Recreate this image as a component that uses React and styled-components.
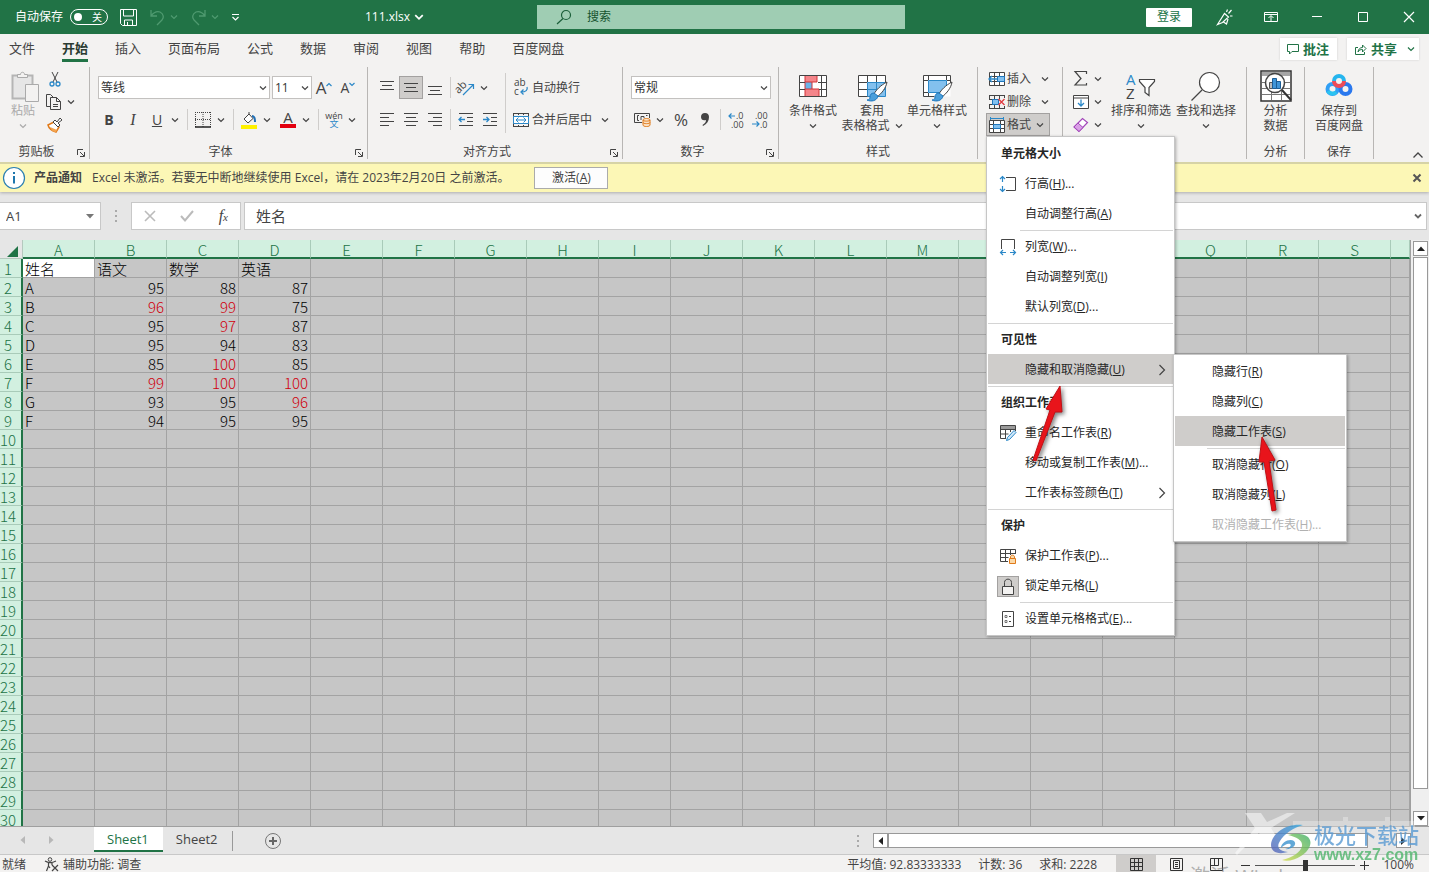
import React from "react";
import styled, { createGlobalStyle } from "styled-components";

const sheetRows = [
  ["姓名", "语文", "数学", "英语"],
  ["A", 95, 88, 87],
  ["B", 96, 99, 75],
  ["C", 95, 97, 87],
  ["D", 95, 94, 83],
  ["E", 85, 100, 85],
  ["F", 99, 100, 100],
  ["G", 93, 95, 96],
  ["F", 94, 95, 95],
];

const columns = "ABCDEFGHIJKLMNOPQRS".split("");
const rowNumbers = Array.from({ length: 31 }, (_, i) => i + 1);
const tabs = [
  "文件",
  "开始",
  "插入",
  "页面布局",
  "公式",
  "数据",
  "审阅",
  "视图",
  "帮助",
  "百度网盘",
];

function Chevron({ color = "#444", size = 8, width = 1.2 }) {
  return (
    <Svg width={size} height={size} viewBox="0 0 8 8">
      <path d="M1 2.5l3 3 3-3" fill="none" stroke={color} strokeWidth={width} />
    </Svg>
  );
}

function Lines({ rows }) {
  return (
    <Svg width="16" height="16" viewBox="0 0 16 16">
      {rows.map(([x1, x2, y]) => (
        <path key={y} d={`M${x1} ${y}.5H${x2}`} stroke="#444" />
      ))}
    </Svg>
  );
}

function UndoIcon({ flip }) {
  return (
    <Svg width="17" height="17" viewBox="0 0 17 17">
      <g
        fill="none"
        stroke="#4f9a70"
        strokeWidth="1.3"
        transform={flip ? "translate(17 0) scale(-1 1)" : undefined}
      >
        <path d="M2 1v6h6M2 7c3-4 6-5 9-4 4 2 4 6 2 8l-5 5" />
      </g>
    </Svg>
  );
}

function TableArt({ children }) {
  return (
    <Svg width="32" height="32" viewBox="0 0 32 32">
      <path d="M2.500 4.500h27v21h-27z" fill="#fff" />
      {children}
    </Svg>
  );
}

function Brush() {
  return (
    <g>
      <path d="M31 11c-6 3-11 8-13 12l3 3c5-4 9-9 10-15z" fill="#fff" stroke="#444" />
      <path d="M18 22c-3 0-4 2-4 4s-1 3-3 3c4 2 10 1 11-4z" fill="#4a9fdb" stroke="#1f77bd" />
    </g>
  );
}

function Launcher() {
  return (
    <LauncherButton aria-label="更多选项">
      <Svg width="8" height="8" viewBox="0 0 8 8">
        <path d="M.5 6V.5H6M3 3l4 4M7.500 3v4.500H3" fill="none" stroke="#444" />
      </Svg>
    </LauncherButton>
  );
}

function Group({ label, width, launcher, children }) {
  return (
    <GroupBox $width={width}>
      <GroupBody>{children}</GroupBody>
      {label && (
        <GroupLabel>
          <span>{label}</span>
          {launcher && <Launcher />}
        </GroupLabel>
      )}
    </GroupBox>
  );
}

function Big({ icon, lines, width, caret, disabled }) {
  return (
    <BigButton $width={width} disabled={disabled}>
      {icon}
      {lines.map((line, i) => (
        <span key={line}>
          {line}
          {caret === "inline" && i === lines.length - 1 && <Chevron />}
        </span>
      ))}
      {caret === "below" && (
        <span>
          <Chevron color={disabled ? "#aaa" : "#444"} />
        </span>
      )}
    </BigButton>
  );
}

function Drop({ icon, label }) {
  return (
    <>
      <IconButton aria-label={label}>{icon}</IconButton>
      <CaretButton aria-label={`${label}选项`}>
        <Chevron />
      </CaretButton>
    </>
  );
}

function Item({ text, accel, dots, icon, active, pressed, disabled, more }) {
  return (
    <MenuItem role="menuitem" $active={active} disabled={disabled}>
      <MenuIcon $pressed={pressed}>{icon}</MenuIcon>
      <span>
        {text}(<u>{accel}</u>){dots && "..."}
      </span>
      {more && (
        <More>
          <Svg width="8" height="12" viewBox="0 0 8 12">
            <path d="M1.500 1l5 5-5 5" fill="none" stroke="#444" strokeWidth="1.2" />
          </Svg>
        </More>
      )}
    </MenuItem>
  );
}

function TitleBar() {
  return (
    <Title>
      <TitleLeft>
        <AutoSave>
          自动保存
          <Toggle>
            <input type="checkbox" />
            <span>关</span>
          </Toggle>
        </AutoSave>
        <QuickButton aria-label="保存">
          <Svg width="17" height="17" viewBox="0 0 17 17">
            <path
              d="M.5.5h16v16h-14l-2-2zM3.500 1v6h10V1M4.500 16v-5h8v5M7.500 16v-3"
              fill="none"
              stroke="#fff"
            />
          </Svg>
        </QuickButton>
        <QuickButton aria-label="撤消">
          <UndoIcon />
          <Chevron color="#4f9a70" />
        </QuickButton>
        <QuickButton aria-label="恢复">
          <UndoIcon flip />
          <Chevron color="#4f9a70" />
        </QuickButton>
        <QuickButton aria-label="自定义快速访问工具栏">
          <Svg width="9" height="9" viewBox="0 0 9 9">
            <path d="M1 1.500h7M1.500 4l3 3 3-3" fill="none" stroke="#fff" strokeWidth="1.2" />
          </Svg>
        </QuickButton>
        <FileName>
          111.xlsx
          <Chevron color="#fff" size={10} width={1.4} />
        </FileName>
      </TitleLeft>
      <Search>
        <Svg width="16" height="16" viewBox="0 0 16 16">
          <circle cx="10" cy="6" r="4.500" fill="none" stroke="#1b5e39" strokeWidth="1.200" />
          <path d="M7 9.500L1 15" stroke="#1b5e39" strokeWidth="1.200" />
        </Svg>
        <input aria-label="搜索" placeholder="搜索" />
      </Search>
      <TitleRight>
        <SignIn>登录</SignIn>
        <WindowButton aria-label="墨迹">
          <Svg width="18" height="18" viewBox="0 0 18 18">
            <path
              d="M1.500 16.500L8.500 5.500l4 3.500-6 5.500zM7.500 14l3 2 1.500-5M10.500 4l1-2.500M12.500 5.500l3-3.500M14 8h2.500"
              fill="none"
              stroke="#fff"
              strokeWidth="1.200"
            />
          </Svg>
        </WindowButton>
        <WindowButton aria-label="功能区显示选项">
          <Svg width="14" height="12" viewBox="0 0 14 12">
            <path d="M.5 1.500h13v9H.5zM.5 3.500h13M7 10V5M4.500 7L7 4.500 9.500 7" fill="none" stroke="#fff" />
          </Svg>
        </WindowButton>
        <WindowButton aria-label="最小化">
          <Svg width="10" height="10" viewBox="0 0 10 10">
            <path d="M0 4.500h10" stroke="#fff" />
          </Svg>
        </WindowButton>
        <WindowButton aria-label="最大化">
          <Svg width="10" height="10" viewBox="0 0 10 10">
            <path d="M.5.500h9v9h-9z" fill="none" stroke="#fff" />
          </Svg>
        </WindowButton>
        <WindowButton aria-label="关闭">
          <Svg width="10" height="10" viewBox="0 0 10 10">
            <path d="M0 0l10 10M10 0L0 10" stroke="#fff" strokeWidth="1.200" />
          </Svg>
        </WindowButton>
      </TitleRight>
    </Title>
  );
}

function TabBar() {
  return (
    <TabRow>
      {tabs.map((tab) => (
        <Tab key={tab} $active={tab === "开始"}>
          {tab}
        </Tab>
      ))}
      <ShareArea>
        <ShareButton>
          <Svg width="12" height="12" viewBox="0 0 12 12">
            <path d="M.5 1.500h11v7H5l-2.500 2.500V8.500h-2z" fill="none" stroke="#217346" />
          </Svg>
          批注
        </ShareButton>
        <ShareButton>
          <Svg width="13" height="13" viewBox="0 0 13 13">
            <path
              d="M4 4.500H1.500v7h9V9M4 9c.5-3 2-4.500 4.500-4.500V2L12 5.500 8.500 9V6.500C6.500 6.500 5 7 4 9z"
              fill="none"
              stroke="#217346"
            />
          </Svg>
          共享
          <ShareCaret>
            <Chevron color="#217346" />
          </ShareCaret>
        </ShareButton>
      </ShareArea>
    </TabRow>
  );
}

function ClipboardGroup() {
  return (
    <Group label="剪贴板" width={90} launcher>
      <Columns $left={7} $gap={4}>
        <Big
          width={32}
          lines={["粘贴"]}
          caret="below"
          disabled
          icon={
            <Svg width="32" height="32" viewBox="0 0 32 32">
              <path d="M5.500 4.500h20v23h-20z" fill="#e6e6e6" stroke="#b5b5b5" strokeWidth="2" />
              <path d="M10.500 6.500v-3h3c0-3 4-3 4 0h3v3z" fill="#f3f2f1" stroke="#aaa" />
              <path d="M18.500 13.500h13v17h-13z" fill="#f3f2f1" stroke="#aaa" />
            </Svg>
          }
        />
        <Stack>
          <StackRow>
            <IconButton aria-label="剪切">
              <Svg width="16" height="16" viewBox="0 0 16 16">
                <path d="M5 1l5 10M11 1L6 11" stroke="#444" fill="none" />
                <g fill="none" stroke="#2b88c8" strokeWidth="1.300">
                  <circle cx="5" cy="13" r="2" />
                  <circle cx="11" cy="13" r="2" />
                </g>
              </Svg>
            </IconButton>
          </StackRow>
          <StackRow>
            <Drop
              label="复制"
              icon={
                <Svg width="18" height="16" viewBox="0 0 18 16">
                  <path d="M6 12.500H1.500v-12h4l3 3M5.500 3.500h6l4 4v8h-10z" fill="#f3f2f1" stroke="#444" />
                  <path d="M11.500 3.500v4h4M8 10.500h5M8 12.500h5" fill="none" stroke="#444" />
                </Svg>
              }
            />
          </StackRow>
          <StackRow>
            <IconButton aria-label="格式刷">
              <Svg width="16" height="16" viewBox="0 0 16 16">
                <path d="M1 8l6-3 5 5-3 5c-3-1-7-3-8-7z" fill="#fff" stroke="#e07a1a" strokeWidth="1.500" />
                <path d="M3 10l7 3-1 2c-3 0-5-2-6-5z" fill="#f4a550" />
                <path d="M6 5l2-2 2 2 3-4 2 2-4 3 2 2-2 2z" fill="#fff" stroke="#444" />
              </Svg>
            </IconButton>
          </StackRow>
        </Stack>
      </Columns>
    </Group>
  );
}

function FontGroup() {
  return (
    <Group label="字体" width={278} launcher>
      <ToolRow $left={8}>
        <Field $width={172}>
          <select aria-label="字体">
            <option>等线</option>
          </select>
          <Chevron />
        </Field>
        <Field $width={40} $gap={2}>
          <select aria-label="字号">
            <option>11</option>
          </select>
          <Chevron />
        </Field>
        <IconButton aria-label="增大字号">
          <GlyphLarge>A</GlyphLarge>
          <Svg width="6" height="12" viewBox="0 0 6 12">
            <path d="M.5 4L3 1.500 5.500 4" fill="none" stroke="#2b88c8" strokeWidth="1.200" />
          </Svg>
        </IconButton>
        <IconButton aria-label="减小字号">
          <Glyph>A</Glyph>
          <Svg width="6" height="12" viewBox="0 0 6 12">
            <path d="M.5 1L3 3.500 5.500 1" fill="none" stroke="#2b88c8" strokeWidth="1.200" />
          </Svg>
        </IconButton>
      </ToolRow>
      <ToolRow $left={7}>
        <IconButton aria-label="加粗">
          <b>B</b>
        </IconButton>
        <IconButton aria-label="倾斜">
          <Italic>I</Italic>
        </IconButton>
        <Drop label="下划线" icon={<u>U</u>} />
        <Sep />
        <Drop
          label="边框"
          icon={
            <Svg width="16" height="16" viewBox="0 0 16 16">
              <path
                d="M.5 0v15M15.500 0v15M8 0v15M0 .5h16M0 7.500h16"
                fill="none"
                stroke="#444"
                strokeDasharray="1 1"
              />
              <path d="M0 15h16" stroke="#222" strokeWidth="1.500" />
            </Svg>
          }
        />
        <Sep />
        <Drop
          label="填充颜色"
          icon={
            <Svg width="16" height="18" viewBox="0 0 16 18">
              <path d="M3 8l5-5 4 4.500-5 4.500zM8 3V1" fill="#fff" stroke="#444" />
              <path d="M11 5c2 0 3 2 3 6" fill="none" stroke="#1f6fb5" strokeWidth="2" />
              <path d="M0 14h16v4H0z" fill="#fff100" />
            </Svg>
          }
        />
        <Drop label="字体颜色" icon={<FontColor>A</FontColor>} />
        <Sep />
        <Drop
          label="拼音"
          icon={
            <Pinyin>
              wén
              <i>文</i>
            </Pinyin>
          }
        />
      </ToolRow>
    </Group>
  );
}

function AlignGroup() {
  return (
    <Group label="对齐方式" width={255} launcher>
      <Columns $left={7}>
        <div>
          <ToolRow>
            <IconButton aria-label="顶端对齐">
              <Lines rows={[[1, 15, 1], [3, 13, 5], [1, 15, 9]]} />
            </IconButton>
            <IconButton aria-label="垂直居中" $active>
              <Lines rows={[[1, 15, 3], [3, 13, 7], [1, 15, 11]]} />
            </IconButton>
            <IconButton aria-label="底端对齐">
              <Lines rows={[[1, 15, 6], [3, 13, 10], [1, 15, 14]]} />
            </IconButton>
            <Sep />
            <Drop
              label="方向"
              icon={
                <Svg width="18" height="16" viewBox="0 0 18 16">
                  <text x="-2" y="10" fontSize="11" fill="#444" transform="rotate(-45 5 8)">
                    ab
                  </text>
                  <path d="M6 15L16 5M11.500 4.500h5V9" fill="none" stroke="#2b88c8" strokeWidth="1.200" />
                </Svg>
              }
            />
          </ToolRow>
          <ToolRow>
            <IconButton aria-label="左对齐">
              <Lines rows={[[1, 15, 1], [1, 10, 5], [1, 15, 9], [1, 10, 13]]} />
            </IconButton>
            <IconButton aria-label="居中">
              <Lines rows={[[1, 15, 1], [3, 13, 5], [1, 15, 9], [3, 13, 13]]} />
            </IconButton>
            <IconButton aria-label="右对齐">
              <Lines rows={[[1, 15, 1], [6, 15, 5], [1, 15, 9], [6, 15, 13]]} />
            </IconButton>
            <Sep />
            <IconButton aria-label="减少缩进量">
              <Svg width="16" height="16" viewBox="0 0 16 16">
                <path d="M1 1.500h14M9 5.500h6M9 9.500h6M1 13.500h14" stroke="#444" />
                <path d="M7 7.500H1M3.500 5L1 7.500 3.500 10" fill="none" stroke="#2b88c8" strokeWidth="1.300" />
              </Svg>
            </IconButton>
            <IconButton aria-label="增加缩进量">
              <Svg width="16" height="16" viewBox="0 0 16 16">
                <path d="M1 1.500h14M9 5.500h6M9 9.500h6M1 13.500h14" stroke="#444" />
                <path d="M1 7.500h6M4.500 5L7 7.500 4.500 10" fill="none" stroke="#2b88c8" strokeWidth="1.300" />
              </Svg>
            </IconButton>
          </ToolRow>
        </div>
        <TallSep />
        <div>
          <ToolRow>
            <TextButton>
              <Svg width="16" height="17" viewBox="0 0 16 17">
                <text x="1" y="7" fontSize="10" fill="#444">
                  ab
                </text>
                <text x="1" y="16" fontSize="10" fill="#444">
                  c
                </text>
                <path d="M14 8c1 3-1 5-6 5M10.500 10.500L8 13l2.500 2.500" fill="none" stroke="#2b88c8" strokeWidth="1.300" />
              </Svg>
              自动换行
            </TextButton>
          </ToolRow>
          <ToolRow>
            <TextButton>
              <Svg width="16" height="16" viewBox="0 0 16 16">
                <path d="M.5 1v14M15.500 1v14M0 1.500h16M0 14.500h16M5.500 1v2M10.500 1v2M5.500 13v2M10.500 13v2" stroke="#444" />
                <path d="M.5 4.500h15v7H.5z" fill="#fff" stroke="#2b88c8" />
                <path d="M3 8h10M5.500 5.500L3 8l2.500 2.500M10.500 5.500L13 8l-2.500 2.500" fill="none" stroke="#2b88c8" />
              </Svg>
              合并后居中
              <CaretSpace>
                <Chevron />
              </CaretSpace>
            </TextButton>
          </ToolRow>
        </div>
      </Columns>
    </Group>
  );
}

function NumberGroup() {
  return (
    <Group label="数字" width={156} launcher>
      <ToolRow $left={8}>
        <Field $width={140}>
          <select aria-label="数字格式">
            <option>常规</option>
          </select>
          <Chevron />
        </Field>
      </ToolRow>
      <ToolRow $left={7}>
        <Drop
          label="会计数字格式"
          icon={
            <Svg width="17" height="15" viewBox="0 0 17 15">
              <path d="M15.500 6V1.500H.5v9H8M5 3.500H3.500v5H5M7 8V4.500h3V6M12 3.500h1.500" fill="none" stroke="#444" />
              <path d="M9 8c0-2 7-2 7 0v5c0 2-7 2-7 0z" fill="#fbe3c8" stroke="#e07a1a" />
              <path d="M9 8c0 1.500 7 1.500 7 0M9 10.500c0 1.500 7 1.500 7 0" fill="none" stroke="#e07a1a" />
            </Svg>
          }
        />
        <IconButton aria-label="百分比样式">
          <GlyphLarge>%</GlyphLarge>
        </IconButton>
        <IconButton aria-label="千位分隔样式">
          <Svg width="8" height="13" viewBox="0 0 8 13">
            <path d="M4 0c2.500 0 4 1.500 4 4 0 4-2 7-6 9l-.5-1C4 10.500 5 9 5 7 2 8 0 6.500 0 4c0-2.500 1.500-4 4-4z" fill="#444" />
          </Svg>
        </IconButton>
        <Sep />
        <IconButton aria-label="增加小数位数">
          <Svg width="16" height="16" viewBox="0 0 16 16">
            <text x="8" y="7" fontSize="9" fill="#444">
              .0
            </text>
            <text x="3" y="16" fontSize="9" fill="#444">
              .00
            </text>
            <path d="M7 4H1M3.500 1.500L1 4l2.500 2.500" fill="none" stroke="#2b88c8" strokeWidth="1.200" />
          </Svg>
        </IconButton>
        <IconButton aria-label="减少小数位数">
          <Svg width="16" height="16" viewBox="0 0 16 16">
            <text x="3" y="7" fontSize="9" fill="#444">
              .00
            </text>
            <text x="8" y="16" fontSize="9" fill="#444">
              .0
            </text>
            <path d="M0 12h7M4.500 9.500L7 12l-2.500 2.500" fill="none" stroke="#2b88c8" strokeWidth="1.200" />
          </Svg>
        </IconButton>
      </ToolRow>
    </Group>
  );
}

function StylesGroup() {
  return (
    <Group label="样式" width={199}>
      <Columns $left={10} $gap={5}>
        <Big
          width={48}
          lines={["条件格式"]}
          caret="below"
          icon={
            <TableArt>
              <path d="M8 5h12v6H8z" fill="#f4858a" />
              <path d="M8 11h7v7H8z" fill="#6cb4e8" />
              <path d="M8 18h14v7H8z" fill="#f4858a" />
              <path d="M8 5v20M20 5v6M15 11v7M22 18v7M8 11h12M8 18h14" fill="none" stroke="#d13438" />
              <path d="M2.500 4.500h27v21h-27zM3 11.500h5M21 11.500h8M3 18.500h5M22 18.500h7M24.500 5v20" fill="none" stroke="#444" />
            </TableArt>
          }
        />
        <Big
          width={60}
          lines={["套用", "表格格式"]}
          caret="inline"
          icon={
            <TableArt>
              <path d="M11.500 11.500h18v14h-18z" fill="#83c0ee" />
              <path d="M11.500 11.500h18v14h-18zM20.500 11.500v14M12 18.500h17" fill="none" stroke="#2b88c8" />
              <path d="M29.500 12V4.500h-27v21h9M11.500 5v6M20.500 5v6M3 11.500h8M3 18.500h8" fill="none" stroke="#444" />
              <Brush />
            </TableArt>
          }
        />
        <Big
          width={60}
          lines={["单元格样式"]}
          caret="below"
          icon={
            <TableArt>
              <path d="M7.500 9.500h18v12h-18z" fill="#83c0ee" stroke="#2b88c8" />
              <path d="M29.500 12V4.500h-27v21h11M7.500 5v4M25.500 5v4M7.500 22v3M3 9.500h4M3 21.500h4M26 9.500h3" fill="none" stroke="#444" />
              <Brush />
            </TableArt>
          }
        />
      </Columns>
    </Group>
  );
}

function FormatMenu() {
  return (
    <Menu role="menu">
      <MenuHeading>单元格大小</MenuHeading>
      <Item
        text="行高"
        accel="H"
        dots
        icon={
          <Svg width="16" height="16" viewBox="0 0 16 16">
            <path d="M6 1.500h9.500v13H6" fill="none" stroke="#444" />
            <path d="M2.500 0v6M2.500 10v6M0 3L2.500.500 5 3M0 13l2.500 2.500L5 13" fill="none" stroke="#2b88c8" strokeWidth="1.200" />
          </Svg>
        }
      />
      <Item text="自动调整行高" accel="A" />
      <MenuLine $inset />
      <Item
        text="列宽"
        accel="W"
        dots
        icon={
          <Svg width="16" height="16" viewBox="0 0 16 16">
            <path d="M1.500 10V.5h13V10" fill="none" stroke="#444" />
            <path d="M0 13.500h6M10 13.500h6M3 11L.5 13.500 3 16M13 11l2.500 2.500L13 16" fill="none" stroke="#2b88c8" strokeWidth="1.200" />
          </Svg>
        }
      />
      <Item text="自动调整列宽" accel="I" />
      <Item text="默认列宽" accel="D" dots />
      <MenuLine />
      <MenuHeading>可见性</MenuHeading>
      <SubAnchor>
        <Item text="隐藏和取消隐藏" accel="U" active more />
        <SubMenu role="menu">
          <Item text="隐藏行" accel="R" />
          <Item text="隐藏列" accel="C" />
          <Item text="隐藏工作表" accel="S" active />
          <MenuLine $inset />
          <Item text="取消隐藏行" accel="O" />
          <Item text="取消隐藏列" accel="L" />
          <Item text="取消隐藏工作表" accel="H" dots disabled />
        </SubMenu>
      </SubAnchor>
      <MenuLine />
      <MenuHeading>组织工作表</MenuHeading>
      <Item
        text="重命名工作表"
        accel="R"
        icon={
          <Svg width="16" height="16" viewBox="0 0 16 16">
            <path d="M.5 1h15v3H.5z" fill="#9a9a9a" />
            <path d="M15.500 6V.5H.5v13H6M.5 4.500h15M.5 9h8M5.500 4.500v9M10.500 4.500V7" fill="none" stroke="#444" />
            <path d="M14 5.500l2 2-6.500 7-3 1 1-3z" fill="#cfe6f7" stroke="#2b88c8" />
          </Svg>
        }
      />
      <Item text="移动或复制工作表" accel="M" dots />
      <Item text="工作表标签颜色" accel="T" more />
      <MenuLine />
      <MenuHeading>保护</MenuHeading>
      <Item
        text="保护工作表"
        accel="P"
        dots
        icon={
          <Svg width="16" height="16" viewBox="0 0 16 16">
            <path d="M15.500 6V1.500H.5v12H8M.5 5.500h15M.5 9.500h8M5.500 1.500v12M10.500 1.500V7" fill="none" stroke="#444" />
            <path d="M9.500 10.500h6v5h-6zM10.500 10.500V9c0-2.500 4-2.500 4 0v1.500" fill="#fbd9a8" stroke="#e07a1a" />
          </Svg>
        }
      />
      <Item
        text="锁定单元格"
        accel="L"
        pressed
        icon={
          <Svg width="16" height="17" viewBox="0 0 16 17">
            <path d="M2.500 8.500h11v8h-11z" fill="#f3f2f1" stroke="#444" />
            <path d="M4.500 8V4.500c0-4.500 7-4.500 7 0V8" fill="none" stroke="#444" />
          </Svg>
        }
      />
      <MenuLine $inset />
      <Item
        text="设置单元格格式"
        accel="E"
        dots
        icon={
          <Svg width="12" height="16" viewBox="0 0 12 16">
            <path d="M.5.500h11v15H.5z" fill="none" stroke="#444" />
            <path d="M3 4.500h2v2H3zM3 9.500h2v2H3z" fill="none" stroke="#444" strokeWidth=".7" />
            <path d="M7 5.500h2M7 10.500h2" stroke="#444" />
          </Svg>
        }
      />
      <Pointers viewBox="0 0 310 140" width="310" height="140">
        <polygon points="46,80 63,30 59,29 73,6 75,32 68,32 49,81" />
        <polygon points="285,131 277,82 272,82 275,57 288,80 282,81 289,130" />
      </Pointers>
    </Menu>
  );
}

function CellsGroup() {
  return (
    <Group width={85}>
      <Columns $left={8}>
        <Stack>
          <CellButton>
            <Svg width="16" height="16" viewBox="0 0 16 16">
              <path d="M.5 1.500h15v13H.5zM.5 5.500h15M.5 10.500h15M5.500 1v14M10.500 1v14" fill="#fff" stroke="#444" />
              <path d="M8.500 5.500h7v5h-7z" fill="#83c0ee" stroke="#1f77bd" />
              <path d="M0 8h8M3 5L0 8l3 3" fill="none" stroke="#2b88c8" strokeWidth="1.400" />
            </Svg>
            插入
            <CaretEnd>
              <Chevron />
            </CaretEnd>
          </CellButton>
          <CellButton>
            <Svg width="16" height="16" viewBox="0 0 16 16">
              <path d="M0 1.500h16M0 14.500h16M5.500 1v4M10.500 1v4M5.500 11v4M10.500 11v4M.5 1v4M.5 11v4M0 5.500h5M0 10.500h5M15.500 1v3M15.500 12v3" fill="none" stroke="#444" />
              <path d="M3.500 5.500h6v5h-6z" fill="#83c0ee" stroke="#1f77bd" />
              <path d="M9.500 5l6 6M15.500 5l-6 6" stroke="#e0393e" strokeWidth="1.300" />
            </Svg>
            删除
            <CaretEnd>
              <Chevron />
            </CaretEnd>
          </CellButton>
          <MenuAnchor>
            <CellButton $active aria-haspopup="menu">
              <Svg width="16" height="16" viewBox="0 0 16 16">
                <path d="M.5 3.500h15v12H.5zM.5 7.500h15M.5 11.500h15M4.500 3v13M11.500 3v13" fill="#fff" stroke="#444" />
                <path d="M4.500 7.500h7v4h-7z" fill="#83c0ee" stroke="#1f77bd" />
                <path d="M1 1.500h14M1.500 0v3M14.500 0v3" stroke="#2b88c8" />
              </Svg>
              格式
              <Chevron />
            </CellButton>
            <FormatMenu />
          </MenuAnchor>
        </Stack>
      </Columns>
    </Group>
  );
}

function EditGroup() {
  return (
    <Group width={184}>
      <Columns $left={7} $gap={5}>
        <Stack>
          <StackRow>
            <Drop
              label="自动求和"
              icon={
                <Svg width="14" height="15" viewBox="0 0 14 15">
                  <path d="M12.500 3V.5H1l6 7-6 6.500h11.500V12" fill="none" stroke="#444" strokeWidth="1.200" />
                </Svg>
              }
            />
          </StackRow>
          <StackRow>
            <Drop
              label="填充"
              icon={
                <Svg width="16" height="14" viewBox="0 0 16 14">
                  <path d="M.5.500h15v13H.5zM.5 3h15" fill="#fff" stroke="#444" />
                  <path d="M8 4.500V11M5 8l3 3 3-3" fill="none" stroke="#2b88c8" strokeWidth="1.300" />
                </Svg>
              }
            />
          </StackRow>
          <StackRow>
            <Drop
              label="清除"
              icon={
                <Svg width="16" height="16" viewBox="0 0 16 16">
                  <path d="M1 10L9.500 1.500l5 4L6 14.500z" fill="#fff" stroke="#a347ba" strokeWidth="1.200" />
                  <path d="M1 10l4-4 5 4.500L6 14.500z" fill="#d9a0e6" stroke="#a347ba" />
                </Svg>
              }
            />
          </StackRow>
        </Stack>
        <Big
          width={60}
          lines={["排序和筛选"]}
          caret="below"
          icon={
            <Svg width="32" height="32" viewBox="0 0 32 32">
              <text x="1" y="14" fontSize="15" fill="#2b88c8">
                A
              </text>
              <text x="1" y="28" fontSize="15" fill="#444">
                Z
              </text>
              <path d="M14.500 8.500h15v2l-5.500 6v8l-4-3v-5l-5.500-6z" fill="#fff" stroke="#444" strokeWidth="1.200" />
            </Svg>
          }
        />
        <Big
          width={60}
          lines={["查找和选择"]}
          caret="below"
          icon={
            <Svg width="32" height="32" viewBox="0 0 32 32">
              <circle cx="19.500" cy="11.500" r="10" fill="#fff" stroke="#444" strokeWidth="1.200" />
              <path d="M12 19L1.500 29.500" stroke="#444" strokeWidth="1.300" />
            </Svg>
          }
        />
      </Columns>
    </Group>
  );
}

function Ribbon() {
  return (
    <RibbonRow>
      <ClipboardGroup />
      <FontGroup />
      <AlignGroup />
      <NumberGroup />
      <StylesGroup />
      <CellsGroup />
      <EditGroup />
      <Group label="分析" width={58}>
        <Big
          lines={["分析", "数据"]}
          icon={
            <Svg width="32" height="32" viewBox="0 0 32 32">
              <path d="M1 0h30v30H1z" fill="#fff" stroke="#333" strokeWidth="1.500" />
              <path d="M2 1h28v4H2z" fill="#a6a6a6" />
              <path d="M2 11.500h28M2 17.500h28M2 23.500h28M11.500 17v12M21.500 17v12" stroke="#777" />
              <circle cx="15" cy="12" r="9.500" fill="#fff" stroke="#444" strokeWidth="1.500" />
              <path d="M9.500 11.500h3v6h-3z" fill="#bbb" stroke="#555" />
              <path d="M12.500 7.500h4v10h-4zM16.500 10.500h4v7h-4z" fill="#3f95d8" stroke="#1b5c94" />
              <path d="M22 19l9 10" stroke="#333" strokeWidth="2" />
            </Svg>
          }
        />
      </Group>
      <Group label="保存" width={69}>
        <Big
          lines={["保存到", "百度网盘"]}
          icon={
            <Svg width="32" height="32" viewBox="0 0 32 32">
              <g fill="none" strokeWidth="4">
                <circle cx="9.500" cy="18" r="5" stroke="#2f9ff5" />
                <circle cx="22.500" cy="18" r="5" stroke="#2a78ee" />
                <path d="M11 10a5 5 0 0 1 10 0" stroke="#25b5ee" />
                <path d="M11 10a5 5 0 0 0 10 0" stroke="#ee4a56" />
                <path d="M5 20a5 5 0 0 0 8 1" stroke="#2bc3f0" />
              </g>
            </Svg>
          }
        />
      </Group>
      <Collapse aria-label="折叠功能区">
        <Svg width="12" height="8" viewBox="0 0 12 8">
          <path d="M1.500 6.500L6 2l4.500 4.500" fill="none" stroke="#444" strokeWidth="1.300" />
        </Svg>
      </Collapse>
    </RibbonRow>
  );
}

function Sheet() {
  return (
    <SheetArea>
      <GridClip>
        <Grid>
          <colgroup>
            <col className="head" />
            {columns.map((c) => (
              <col key={c} className="cell" />
            ))}
            <col />
          </colgroup>
          <thead>
            <tr>
              <Corner aria-label="全选">
                <Svg width="11" height="11" viewBox="0 0 11 11">
                  <path d="M11 0v11H0z" fill="#217346" />
                </Svg>
              </Corner>
              {columns.map((c) => (
                <ColHead key={c}>{c}</ColHead>
              ))}
              <ColHead />
            </tr>
          </thead>
          <tbody>
            {rowNumbers.map((n) => (
              <tr key={n}>
                <RowHead>{n}</RowHead>
                {columns.map((c, i) => {
                  const value = sheetRows[n - 1]?.[i];
                  const number = typeof value === "number";
                  return (
                    <Cell
                      key={c}
                      $number={number}
                      $red={number && value > 95}
                      $current={n === 1 && i === 0}
                    >
                      {value}
                    </Cell>
                  );
                })}
                <Cell />
              </tr>
            ))}
          </tbody>
        </Grid>
      </GridClip>
      <VScroll>
        <ScrollButton aria-label="向上滚动">
          <Svg width="8" height="5" viewBox="0 0 8 5">
            <path d="M0 5l4-4.500L8 5z" fill="#222" />
          </Svg>
        </ScrollButton>
        <VThumb />
        <ScrollButton aria-label="向下滚动">
          <Svg width="8" height="5" viewBox="0 0 8 5">
            <path d="M0 0l4 4.500L8 0z" fill="#222" />
          </Svg>
        </ScrollButton>
      </VScroll>
    </SheetArea>
  );
}

function SheetTabs() {
  return (
    <SheetBar>
      <SheetNav>
        <Svg width="5" height="8" viewBox="0 0 5 8">
          <path d="M5 0v8L.5 4z" fill="#b8b8b8" />
        </Svg>
        <Svg width="5" height="8" viewBox="0 0 5 8">
          <path d="M0 0v8l4.500-4z" fill="#b8b8b8" />
        </Svg>
      </SheetNav>
      <SheetTab $active>Sheet1</SheetTab>
      <SheetTab>Sheet2</SheetTab>
      <AddSheet aria-label="新工作表">
        <Svg width="16" height="16" viewBox="0 0 16 16">
          <circle cx="8" cy="8" r="7.500" fill="none" stroke="#777" />
          <path d="M8 4v8M4 8h8" stroke="#666" strokeWidth="2" />
        </Svg>
      </AddSheet>
      <HScroll>
        <Dots>
          <Svg width="3" height="12" viewBox="0 0 3 12">
            <path d="M0 0h2v2H0zM0 5h2v2H0zM0 10h2v2H0z" fill="#aaa" />
          </Svg>
        </Dots>
        <ScrollButton aria-label="向左滚动">
          <Svg width="5" height="8" viewBox="0 0 5 8">
            <path d="M5 0v8L.5 4z" fill="#222" />
          </Svg>
        </ScrollButton>
        <HThumb />
        <ScrollButton aria-label="向右滚动">
          <Svg width="5" height="8" viewBox="0 0 5 8">
            <path d="M0 0v8l4.500-4z" fill="#222" />
          </Svg>
        </ScrollButton>
      </HScroll>
    </SheetBar>
  );
}

function StatusBar() {
  return (
    <Status>
      <span>就绪</span>
      <Access>
        <Svg width="15" height="15" viewBox="0 0 15 15">
          <circle cx="6" cy="2.500" r="1.800" fill="none" stroke="#444" />
          <path d="M1 4c3 2 7 2 11 0M4.500 5.500V9L2.500 14M8 5.500V8M8 8l6 6M14 8l-6 6M4.500 9L6 11" fill="none" stroke="#444" strokeWidth="1.200" />
        </Svg>
        辅助功能: 调查
      </Access>
      <Stats>
        <span>平均值: 92.83333333</span>
        <span>计数: 36</span>
        <span>求和: 2228</span>
      </Stats>
      <ViewButton $active aria-label="普通">
        <Svg width="13" height="13" viewBox="0 0 13 13">
          <path d="M.5.500h12v12H.5zM.5 4.500h12M.5 8.500h12M4.500.500v12M8.500.500v12" fill="none" stroke="#333" />
        </Svg>
      </ViewButton>
      <ViewButton aria-label="页面布局">
        <Svg width="13" height="13" viewBox="0 0 13 13">
          <path d="M.5.500h12v12H.5zM3.500 2.500h6v8h-6zM5 4.500h3M5 6.500h3M5 8.500h3" fill="none" stroke="#333" />
        </Svg>
      </ViewButton>
      <ViewButton aria-label="分页预览">
        <Svg width="13" height="13" viewBox="0 0 13 13">
          <path d="M.5.500h12v12H.5zM.5 7.500h8M4.500.500v7M8.500.500v7" fill="none" stroke="#333" />
        </Svg>
      </ViewButton>
      <Zoom>
        <ZoomButton aria-label="缩小">
          <Svg width="9" height="9" viewBox="0 0 9 9">
            <path d="M0 4.500h9" stroke="#333" />
          </Svg>
        </ZoomButton>
        <input type="range" aria-label="显示比例" min="0" max="100" defaultValue="50" />
        <ZoomButton aria-label="放大">
          <Svg width="9" height="9" viewBox="0 0 9 9">
            <path d="M0 4.500h9M4.500 0v9" stroke="#333" />
          </Svg>
        </ZoomButton>
        <span>100%</span>
      </Zoom>
    </Status>
  );
}

function SiteMark() {
  return (
    <>
      <Activate>激活 Windows</Activate>
      <Ghost viewBox="0 0 190 45" width="190" height="45">
        <path d="M10 0h16l6 9L52 0h8L36 15l10 16H30L24 20 2 42 0 40l20-25z" fill="#fff" opacity=".5" />
        <path d="M58 8h122v6H58zM108 4h5v18h-5zM150 4h5v18h-5z" fill="#fff" opacity=".3" />
      </Ghost>
      <Mark>
        <Svg width="44" height="40" viewBox="0 0 44 40">
          <defs>
            <linearGradient id="green" x1="0" x2="1" y1="1" y2="0">
              <stop offset="0" stopColor="#d5dd4a" />
              <stop offset="1" stopColor="#38ad6b" />
            </linearGradient>
            <linearGradient id="blue" x1="0" x2="1" y1="1" y2="0">
              <stop offset="0" stopColor="#5a62b8" />
              <stop offset="1" stopColor="#35a8dd" />
            </linearGradient>
          </defs>
          <path d="M33 2C18 0 2 9 1 22c0 7 7 10 17 7-9-1-12-5-8-11C14 11 23 5 33 2z" fill="url(#blue)" />
          <path d="M18 12c6-2 15-2 20 2 6 6 0 15-7 19-6 4-14 6-19 4 10-2 19-8 20-14 1-6-6-9-14-11z" fill="url(#green)" />
          <path d="M11 25c0-6 9-10 13-7 4 4-3 9-9 8 5-1 7-4 5-5s-6 1-9 4z" fill="#3b93cf" />
        </Svg>
        <MarkText>
          <strong>极光下载站</strong>
          <span>www.xz7.com</span>
        </MarkText>
      </Mark>
    </>
  );
}

function App() {
  return (
    <Window>
      <GlobalStyle />
      <TitleBar />
      <TabBar />
      <Ribbon />
      <Notice>
        <Svg width="24" height="24" viewBox="0 0 24 24">
          <circle cx="12" cy="12" r="10.500" fill="#fff" stroke="#2b7fb0" strokeWidth="1.200" />
          <path d="M12 10v7.500M12 6v2" stroke="#1f77ad" strokeWidth="2" />
        </Svg>
        <strong>产品通知</strong>
        <span>Excel 未激活。若要无中断地继续使用 Excel，请在 2023年2月20日 之前激活。</span>
        <NoticeButton>
          激活(<u>A</u>)
        </NoticeButton>
        <NoticeClose aria-label="关闭通知">
          <Svg width="8" height="8" viewBox="0 0 8 8">
            <path d="M.5.500l7 7M7.500.500l-7 7" stroke="#555" strokeWidth="2" />
          </Svg>
        </NoticeClose>
      </Notice>
      <FormulaBar>
        <NameBox>
          <input aria-label="名称框" defaultValue="A1" />
          <Svg width="8" height="5" viewBox="0 0 8 5">
            <path d="M0 0h8L4 4.500z" fill="#777" />
          </Svg>
        </NameBox>
        <Dots>
          <Svg width="3" height="12" viewBox="0 0 3 12">
            <path d="M0 0h2v2H0zM0 5h2v2H0zM0 10h2v2H0z" fill="#aaa" />
          </Svg>
        </Dots>
        <FxBox>
          <button aria-label="取消">
            <Svg width="12" height="12" viewBox="0 0 12 12">
              <path d="M1 1l10 10M11 1L1 11" stroke="#bbb" strokeWidth="1.600" />
            </Svg>
          </button>
          <button aria-label="输入">
            <Svg width="14" height="12" viewBox="0 0 14 12">
              <path d="M1 6l4 4.500L13 1" fill="none" stroke="#bbb" strokeWidth="2" />
            </Svg>
          </button>
          <FxButton aria-label="插入函数">
            f<small>x</small>
          </FxButton>
        </FxBox>
        <FormulaInput>
          <input aria-label="编辑栏" defaultValue="姓名" />
          <Chevron color="#666" width={1.8} />
        </FormulaInput>
      </FormulaBar>
      <Sheet />
      <SheetTabs />
      <StatusBar />
      <SiteMark />
    </Window>
  );
}

export default App;

const GlobalStyle = createGlobalStyle`
  * {
    box-sizing: border-box;
  }

  body {
    margin: 0;
    overflow: hidden;
  }

  body, button, input, select {
    font-family: "Open Sans", "Noto Sans CJK SC", sans-serif;
    font-size: 12px;
    line-height: 16px;
    color: #444;
  }

  button {
    border: 0;
    padding: 0;
    background: none;
    white-space: nowrap;
  }

  input, select {
    border: 0;
    padding: 0;
    outline: 0;
    background: none;
    appearance: none;
    min-width: 0;
  }
`;

const Svg = styled.svg`
  display: block;
  flex: none;
  overflow: visible;
`;

const Window = styled.div`
  position: relative;
  display: flex;
  flex-direction: column;
  height: 100vh;
  overflow: hidden;
  background: #e6e6e6;
`;

const Title = styled.header`
  display: grid;
  grid-template-columns: 537fr 368px 524fr;
  align-items: center;
  height: 34px;
  flex: none;
  background: #217346;
  color: #fff;
`;

const TitleLeft = styled.div`
  display: flex;
  align-items: center;
  gap: 12px;
  padding-left: 15px;
`;

const AutoSave = styled.label`
  display: flex;
  align-items: center;
  gap: 7px;
`;

const Toggle = styled.span`
  display: flex;
  align-items: center;
  justify-content: space-between;
  width: 38px;
  height: 16px;
  padding: 0 5px 0 3px;
  border: 1px solid #fff;
  border-radius: 8px;
  font-size: 10px;
  line-height: 14px;

  input {
    width: 8px;
    height: 8px;
    margin: 0;
    border-radius: 50%;
    background: #fff;
  }
`;

const QuickButton = styled.button`
  display: flex;
  align-items: center;
  gap: 4px;
`;

const FileName = styled.div`
  display: flex;
  align-items: center;
  gap: 4px;
  margin: 0 auto;
`;

const Search = styled.label`
  display: flex;
  align-items: center;
  gap: 15px;
  height: 24px;
  padding-left: 19px;
  background: #9fcdb3;

  input {
    flex: 1;
  }

  input::placeholder {
    color: #17542f;
  }
`;

const TitleRight = styled.div`
  display: flex;
  align-items: center;
  justify-content: flex-end;
  margin-right: -3px;
`;

const SignIn = styled.button`
  width: 46px;
  height: 19px;
  margin-right: 10px;
  border-radius: 1px;
  background: #fff;
  color: #217346;
`;

const WindowButton = styled.button`
  display: flex;
  justify-content: center;
  width: 46px;
`;

const TabRow = styled.nav`
  display: flex;
  align-items: flex-start;
  gap: 27px;
  height: 30px;
  flex: none;
  padding: 4px 10px 0 9px;
  background: #f3f2f1;
`;

const Tab = styled.button`
  padding: 0 0 1px;
  font-size: 13px;
  line-height: 20px;
  border-bottom: 3px solid ${({ $active }) => ($active ? "#217346" : "transparent")};
  color: ${({ $active }) => ($active ? "#2b3b32" : "#444")};
  font-weight: ${({ $active }) => ($active ? 700 : 400)};
`;

const ShareArea = styled.div`
  display: flex;
  gap: 10px;
  margin-left: auto;
`;

const ShareButton = styled.button`
  display: flex;
  align-items: center;
  gap: 4px;
  height: 22px;
  padding: 0 8px 0 7px;
  background: #fff;
  box-shadow: 0 0 2px #ccc;
  color: #217346;
  font-size: 13px;
  font-weight: 700;
`;

const ShareCaret = styled.span`
  margin: 0 -4px 0 6px;
`;

const RibbonRow = styled.div`
  position: relative;
  z-index: 2;
  display: flex;
  height: 98px;
  flex: none;
  padding-top: 3px;
  background: #f3f2f1;
`;

const GroupBox = styled.section`
  display: flex;
  flex-direction: column;
  width: ${({ $width }) => $width}px;
  height: 92px;
  flex: none;
  border-right: 1px solid #b8b6b4;
`;

const GroupBody = styled.div`
  flex: 1;
`;

const GroupLabel = styled.div`
  display: flex;
  align-items: center;
  height: 14px;

  > span {
    flex: 1;
    text-align: center;
  }
`;

const LauncherButton = styled.button`
  width: 16px;
  padding: 5px 4px 3px;
`;

const Columns = styled.div`
  display: flex;
  justify-content: flex-start;
  gap: ${({ $gap }) => $gap || 0}px;
  padding-left: ${({ $left }) => $left || 0}px;
`;

const ToolRow = styled.div`
  display: flex;
  align-items: center;
  height: 23px;
  margin-top: 9px;
  padding-left: ${({ $left }) => $left || 0}px;
`;

const IconButton = styled.button`
  display: flex;
  align-items: center;
  justify-content: center;
  width: 24px;
  height: 23px;
  font-size: 14px;
  background: ${({ $active }) => ($active ? "#cfcdcb" : "none")};
  box-shadow: ${({ $active }) => ($active ? "inset 0 0 0 1px #a3a1a0" : "none")};
`;

const CaretButton = styled.button`
  display: flex;
  justify-content: center;
  width: 12px;
  margin-right: 3px;
`;

const TextButton = styled.button`
  display: flex;
  align-items: center;
  gap: 3px;
  padding-left: 7px;
`;

const CaretSpace = styled.span`
  margin-left: 6px;
`;

const Sep = styled.i`
  width: 1px;
  height: 21px;
  margin: 0 3px;
  background: #cfcdcb;
`;

const TallSep = styled.i`
  width: 1px;
  height: 60px;
  margin-top: 6px;
  margin-left: 3px;
  background: #cfcdcb;
`;

const Field = styled.label`
  display: flex;
  align-items: center;
  width: ${({ $width }) => $width}px;
  height: 23px;
  margin-left: ${({ $gap }) => $gap || 0}px;
  padding: 0 2px;
  border: 1px solid #c3c1bf;
  background: #fff;

  select {
    flex: 1;
    color: #333;
  }
`;

const Glyph = styled.span`
  font-size: 14px;
`;

const GlyphLarge = styled.span`
  font-size: 17px;
`;

const Italic = styled.em`
  font-family: "Liberation Serif", serif;
  font-size: 16px;
`;

const FontColor = styled.span`
  width: 16px;
  border-bottom: 4px solid #e3000f;
  font-size: 15px;
  line-height: 13px;
  text-align: center;
`;

const Pinyin = styled.span`
  font-size: 9px;
  line-height: 8px;
  text-align: center;

  i {
    display: block;
    color: #2b88c8;
    font-style: normal;
  }
`;

const BigButton = styled.button`
  display: flex;
  flex-direction: column;
  align-items: center;
  width: ${({ $width }) => ($width ? `${$width}px` : "100%")};
  padding-top: 4px;
  color: ${({ disabled }) => (disabled ? "#aaa" : "#444")};

  > span {
    display: flex;
    align-items: center;
    gap: 5px;
    height: 15px;
  }
`;

const Stack = styled.div`
  display: flex;
  flex-direction: column;
`;

const StackRow = styled.div`
  display: flex;
  align-items: center;
  width: 36px;
  height: 23px;
`;

const CellButton = styled.button`
  display: flex;
  align-items: center;
  gap: 2px;
  width: 64px;
  height: 23px;
  padding: 0 2px 0 3px;
  background: ${({ $active }) => ($active ? "#cfcdcb" : "none")};
  box-shadow: ${({ $active }) => ($active ? "inset 0 0 0 1px #a3a1a0" : "none")};

  > svg:last-child {
    margin-left: 3px;
  }
`;

const CaretEnd = styled.span`
  margin-left: auto;
  margin-right: -1px;
`;

const MenuAnchor = styled.div`
  position: relative;
`;

const Menu = styled.div`
  position: absolute;
  top: 100%;
  left: 0;
  width: 189px;
  padding: 1px 1px 2px;
  border: 1px solid #c6c6c6;
  background: #fff;
  box-shadow: 1px 1px 3px rgba(0, 0, 0, 0.3);
  color: #262626;
`;

const SubAnchor = styled.div`
  position: relative;
`;

const SubMenu = styled(Menu)`
  top: 0;
  left: 100%;
  width: 174px;
`;

const MenuHeading = styled.div`
  height: 30px;
  padding-left: 13px;
  font-weight: 700;
  line-height: 31px;
`;

const MenuItem = styled.button`
  display: flex;
  align-items: center;
  width: 100%;
  height: 30px;
  padding-top: 2px;
  padding-left: 9px;
  background: ${({ $active }) => ($active ? "#cfcdcb" : "none")};
  color: ${({ disabled }) => (disabled ? "#b1b1b1" : "#262626")};
`;

const MenuIcon = styled.span`
  display: flex;
  align-items: center;
  justify-content: center;
  width: 22px;
  height: 21px;
  margin-right: 6px;
  background: ${({ $pressed }) => ($pressed ? "#cfcdcb" : "none")};
  box-shadow: ${({ $pressed }) => ($pressed ? "inset 0 0 0 1px #a3a1a0" : "none")};
`;

const More = styled.span`
  margin-left: auto;
  margin-right: 7px;
`;

const MenuLine = styled.hr`
  height: 1px;
  margin: 2px 0 0 ${({ $inset }) => ($inset ? 32 : 0)}px;
  border: 0;
  background: #d4d4d4;
`;

const Pointers = styled.svg`
  position: absolute;
  z-index: 3;
  top: 243px;
  left: 0;
  fill: #e8141b;
  stroke: #c01015;
  stroke-width: 1;
  filter: drop-shadow(2px 2px 2px rgba(0, 0, 0, 0.5));
  pointer-events: none;
`;

const Collapse = styled.button`
  align-self: flex-end;
  margin: 0 5px 3px auto;
`;

const Notice = styled.div`
  display: flex;
  align-items: center;
  gap: 8px;
  height: 30px;
  flex: none;
  padding: 0 8px 0 2px;
  border-top: 2px solid #d6d3a6;
  background: #fcf7b6;
  box-shadow: 0 1px 3px rgba(0, 0, 0, 0.25);

  > span {
    margin-left: 2px;
  }
`;

const NoticeButton = styled.button`
  width: 74px;
  height: 22px;
  margin-left: 17px;
  border: 1px solid #ababab;
  background: #fdfdfd;
`;

const NoticeClose = styled.button`
  margin-left: auto;
`;

const FormulaBar = styled.div`
  display: flex;
  height: 48px;
  flex: none;
  padding: 10px 2px 10px 0;
`;

const BarBox = styled.div`
  display: flex;
  align-items: center;
  border: 1px solid #c8c8c8;
  background: #fff;
`;

const NameBox = styled(BarBox)`
  width: 101px;
  padding: 0 6px;
  border-left: 0;

  input {
    flex: 1;
    font-size: 13px;
  }
`;

const Dots = styled.div`
  display: flex;
  align-items: center;
  justify-content: center;
  width: 30px;
`;

const FxBox = styled(BarBox)`
  justify-content: space-between;
  width: 110px;
  padding: 0 12px;
`;

const FxButton = styled.button`
  font-family: "Liberation Serif", serif;
  font-size: 16px;
  font-style: italic;

  small {
    font-size: 11px;
  }
`;

const FormulaInput = styled(BarBox)`
  flex: 1;
  margin-left: 3px;
  padding: 0 4px 0 11px;

  input {
    flex: 1;
    font-size: 15px;
    line-height: 20px;
  }
`;

const SheetArea = styled.main`
  display: flex;
  flex: 1;
  min-height: 0;
`;

const GridClip = styled.div`
  flex: 1;
  min-width: 0;
  overflow: hidden;
  border-right: 1px solid #9f9f9f;
`;

const Grid = styled.table`
  width: 100%;
  table-layout: fixed;
  border-collapse: separate;
  border-spacing: 0;
  font-family: "Noto Sans CJK SC", sans-serif;
  font-size: 15px;
  line-height: 16px;

  .head {
    width: 23px;
  }

  .cell {
    width: 72px;
  }

  th,
  td {
    height: 19px;
    padding: 2px 2px 0;
    font-weight: 300;
    white-space: nowrap;
  }
`;

const Corner = styled.th`
  border-right: 1px solid #b5c9be;
  border-bottom: 1px solid #b5c9be;
  background: #e6e6e6;

  svg {
    margin-left: 5px;
    margin-top: 2px;
  }
`;

const ColHead = styled.th`
  border-right: 1px solid #a9cbb9;
  border-bottom: 2px solid #217346;
  background: #d2f0e0;
  color: #217346;
  line-height: 15px;
`;

const RowHead = styled.th`
  && {
    padding: 2px 0 0;
  }
  border-right: 2px solid #217346;
  border-bottom: 1px solid #a9cbb9;
  background: #d2f0e0;
  color: #217346;
  text-align: center;
  text-indent: -5px;
`;

const Cell = styled.td`
  border-right: 1px solid #a3a3a3;
  border-bottom: 1px solid #a3a3a3;
  background: ${({ $current }) => ($current ? "#fff" : "#c6c6c6")};
  color: ${({ $red }) => ($red ? "#d0000b" : "#000")};
  text-align: ${({ $number }) => ($number ? "right" : "left")};
`;

const VScroll = styled.div`
  display: flex;
  flex-direction: column;
  width: 18px;
  padding: 1px 1px 0 2px;
  background: #efefef;
`;

const ScrollButton = styled.button`
  display: flex;
  align-items: center;
  justify-content: center;
  width: 15px;
  height: 15px;
  flex: none;
  border: 1px solid #999;
  background: #fff;
`;

const VThumb = styled.div`
  flex: 1;
  margin: 1px 0 22px;
  border: 1px solid #999;
  background: #fff;
`;

const SheetBar = styled.div`
  display: flex;
  height: 29px;
  flex: none;
  border-top: 1px solid #9f9f9f;
  border-bottom: 1px solid #c8c8c8;
`;

const SheetNav = styled.div`
  display: flex;
  align-items: center;
  gap: 24px;
  width: 94px;
  padding: 0 0 2px 20px;
`;

const SheetTab = styled.button`
  height: 25px;
  padding: 0 14px 0 13px;
  font-size: 13px;
  border-bottom: 2px solid ${({ $active }) => ($active ? "#217346" : "transparent")};
  background: ${({ $active }) => ($active ? "#fff" : "none")};
  color: ${({ $active }) => ($active ? "#217346" : "#444")};
`;

const AddSheet = styled.button`
  height: 20px;
  margin-top: 4px;
  padding: 2px 0 2px 32px;
  border-left: 1px solid #999;
`;

const HScroll = styled.div`
  display: flex;
  align-items: center;
  width: 568px;
  margin-left: auto;
  margin-right: 18px;
`;

const HThumb = styled.div`
  flex: 1;
  height: 15px;
  margin-right: 28px;
  border: 1px solid #999;
  background: #fff;
`;

const Status = styled.footer`
  display: flex;
  align-items: flex-start;
  height: 17px;
  flex: none;
  padding: 2px 15px 0 2px;
  overflow: hidden;
  background: #f3f2f1;
`;

const Access = styled.div`
  display: flex;
  gap: 4px;
  margin-left: 18px;
`;

const Stats = styled.div`
  display: flex;
  gap: 17px;
  margin-left: auto;
  margin-right: 19px;
`;

const ViewButton = styled.button`
  display: flex;
  justify-content: center;
  width: 40px;
  height: 20px;
  margin-top: -2px;
  padding-top: 3px;
  background: ${({ $active }) => ($active ? "#cfcdcb" : "none")};
`;

const Zoom = styled.div`
  display: flex;
  align-items: center;
  width: 178px;
  padding-left: 5px;

  input {
    width: 100px;
    height: 12px;
    margin: 0 5px;
    background: linear-gradient(#555, #555) center / 100% 1px no-repeat;
  }

  input::-webkit-slider-thumb {
    appearance: none;
    width: 5px;
    height: 11px;
    background: #333;
  }

  span {
    margin-left: auto;
  }
`;

const ZoomButton = styled.button`
  display: flex;
`;

const Activate = styled.div`
  position: absolute;
  top: calc(100% - 7px);
  right: 110px;
  width: 129px;
  font-size: 20px;
  line-height: 24px;
  white-space: nowrap;
  color: rgba(120, 120, 120, 0.55);
`;

const Ghost = styled.svg`
  position: absolute;
  right: 4px;
  bottom: 14px;
  pointer-events: none;
`;

const Mark = styled.div`
  position: absolute;
  right: 10px;
  bottom: 8px;
  display: flex;
  align-items: center;
  opacity: 0.8;
  pointer-events: none;
`;

const MarkText = styled.div`
  display: flex;
  flex-direction: column;
  color: #4fb56c;
  font-family: "Liberation Sans", sans-serif;
  font-size: 16px;
  font-weight: 700;
  line-height: 18px;

  strong {
    color: #5a9bd3;
    font-family: "Noto Sans CJK SC", sans-serif;
    font-size: 21px;
    font-weight: 500;
    line-height: 24px;
  }
`;
